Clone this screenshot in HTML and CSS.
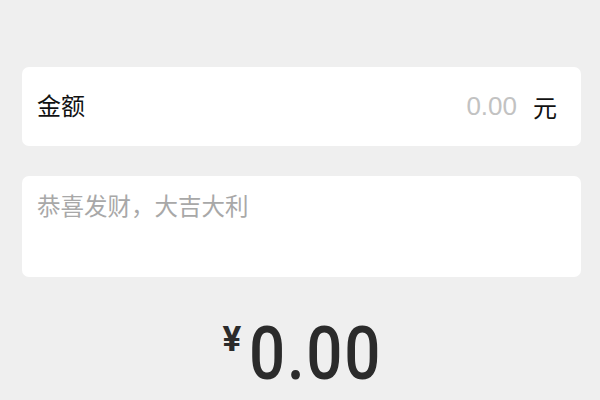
FILE: index.html
```html
<!DOCTYPE html>
<html lang="zh-CN">
<head>
<meta charset="utf-8">
<title>发红包</title>
<link rel="stylesheet" href="styles.css">
</head>
<body>
<div class="page">
  <div class="card amount-row">
    <span class="label">金额</span>
    <span class="amount-input">0.00</span>
    <span class="unit">元</span>
  </div>
  <div class="card message">
    <span class="placeholder">恭喜发财，大吉大利</span>
  </div>
  <div class="total">
    <span class="yen">¥</span><span class="sum">0.00</span>
  </div>
</div>
</body>
</html>
```
FILE: styles.css
```css
html, body {
  margin: 0;
  padding: 0;
  background: #efefef;
}
body {
  font-family: "Noto Sans CJK SC", "Liberation Sans", sans-serif;
  color: #111;
  width: 600px;
  height: 400px;
  overflow: hidden;
}
.page {
  display: flex;
  flex-direction: column;
  padding: 67px 19px 0 22px;
  gap: 30px;
}
.card {
  background: #fff;
  border-radius: 7px;
}
.amount-row {
  height: 79px;
  display: flex;
  align-items: center;
  padding: 0 24px 0 15px;
}
.label {
  font-size: 24px;
  line-height: 1;
  flex: 1;
  margin-top: -3px;
}
.amount-input {
  font-family: "Liberation Sans", sans-serif;
  font-size: 26px;
  color: #c2c2c2;
  margin-right: 16px;
}
.unit {
  font-size: 24px;
  line-height: 1;
}
.message {
  height: 101px;
  padding: 12px 15px 0;
  box-sizing: border-box;
}
.placeholder {
  font-size: 23.5px;
  line-height: 34px;
  color: #a8a8a8;
}
.total {
  display: flex;
  justify-content: center;
  align-items: flex-start;
  margin-top: 10px;
  color: #2b2b2b;
  font-family: Roboto, "Liberation Sans", sans-serif;
}
.yen {
  font-size: 35px;
  font-weight: 700;
  line-height: 1;
  margin-top: 5px;
  margin-right: 8px;
}
.sum {
  font-size: 74px;
  font-weight: 500;
  line-height: 1;
  letter-spacing: 2px;
  transform: scaleX(0.86);
  transform-origin: left top;
  width: 131px;
}
```
